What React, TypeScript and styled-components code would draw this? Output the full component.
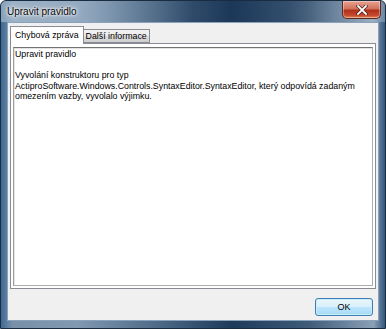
import styled, { createGlobalStyle } from 'styled-components';

const Global = createGlobalStyle`
  html, body { margin: 0; padding: 0; background: #fff; }
  body { font-family: Tahoma, "Liberation Sans", Arial, sans-serif; font-size: 9px; }
`;

const Window = styled.div`
  width: 386px;
  height: 329px;
  box-sizing: border-box;
  display: flex;
  flex-direction: column;
  border: 1px solid #1a2c40;
  border-radius: 6px 6px 0 0;
  background: linear-gradient(90deg, #3e6a95 0%, #7890a8 3%, #8199b1 20%, #4a6785 42%, #1d3a5b 60%, #3f5b79 80%, #8aa0b6 97%, #34577c 100%);
  overflow: hidden;
`;

const TitleBar = styled.div`
  height: 21px;
  flex-shrink: 0;
  display: flex;
  align-items: center;
  justify-content: space-between;
  padding: 0 4px 0 6px;
  background: linear-gradient(90deg, rgba(200,215,230,0.5) 0%, rgba(180,200,220,0.3) 25%, rgba(20,40,70,0.2) 50%, rgba(30,50,80,0.1) 75%, rgba(190,205,220,0.4) 100%);
`;

const Title = styled.span`
  font-family: "Liberation Sans", Arial, sans-serif;
  font-size: 10px;
  color: #000;
  text-shadow: 0 0 6px #fff, 0 0 3px #fff, 0 0 2px #fff;
`;

const CloseButton = styled.div`
  width: 39px;
  height: 18px;
  margin-top: -3px;
  box-sizing: border-box;
  border: 1px solid #5a2a20;
  border-top: none;
  border-radius: 0 0 5px 5px;
  background: linear-gradient(180deg, #e8a393 0%, #d0725b 45%, #b0301a 55%, #c54a2e 85%, #e08a60 100%);
  display: flex;
  align-items: center;
  justify-content: center;
  box-shadow: inset 0 0 0 1px rgba(255,255,255,0.35);
`;

const Client = styled.div`
  flex: 1;
  margin: 0 6px 7px 6px;
  background: #f0f0f0;
  border: 1px solid #8aa2bb;
  display: flex;
  flex-direction: column;
  padding: 2px 2px 0 2px;
`;

const TabStrip = styled.div`
  display: flex;
  align-items: flex-end;
  height: 18px;
  flex-shrink: 0;
  position: relative;
  z-index: 1;
`;

const Tab = styled.div<{ $active?: boolean }>`
  box-sizing: border-box;
  height: ${p => (p.$active ? 18 : 14)}px;
  padding: ${p => (p.$active ? '3px 4px 0 4px' : '1px 2px 0 2px')};
  margin-bottom: ${p => (p.$active ? -1 : 0)}px;
  margin-left: ${p => (p.$active ? 0 : -1)}px;
  border: 1px solid #898c95;
  border-bottom: ${p => (p.$active ? 'none' : '1px solid #898c95')};
  background: ${p => (p.$active ? '#fff' : 'linear-gradient(180deg, #f2f2f2 0%, #ebebeb 50%, #dddddd 51%, #cfcfcf 100%)')};
  color: #000;
  white-space: nowrap;
  font-size: 8.8px;
  line-height: 11px;
  position: relative;
  z-index: ${p => (p.$active ? 2 : 1)};
`;

const TabPanel = styled.div`
  height: 246px;
  flex-shrink: 0;
  box-sizing: border-box;
  border: 1px solid #898c95;
  background: #fff;
  padding: 3px 2px 2px 2px;
  display: flex;
`;

const MessageBox = styled.div`
  flex: 1;
  border: 1px solid #abadb3;
  border-top-color: #737373;
  border-left-color: #a0a0a0;
  box-shadow: inset 1px 1px 0 #e3e3e3;
  background: #fff;
  padding: 1px 1px;
  font-size: 8.8px;
  line-height: 10.5px;
  color: #000;
`;

const Line = styled.div`
  min-height: 10.5px;
  white-space: nowrap;
`;

const ButtonRow = styled.div`
  flex: 1;
  display: flex;
  justify-content: flex-end;
  align-items: flex-end;
  padding: 0 3px 4px 0;
`;

const OkButton = styled.button`
  width: 58px;
  height: 18px;
  padding: 0;
  font-family: inherit;
  font-size: 9px;
  color: #000;
  border: 1px solid #3c7fb1;
  border-radius: 3px;
  background: linear-gradient(180deg, #eaf6fd 0%, #d9f0fc 50%, #bee6fd 51%, #a7d9f5 100%);
  box-shadow: inset 0 0 0 1px #c9ecfc;
`;

export default function App() {
  return (
    <>
      <Global />
      <Window>
        <TitleBar>
          <Title>Upravit pravidlo</Title>
          <CloseButton>
            <svg width="12" height="10" viewBox="0 0 12 10">
              <path d="M2 1 L10 9 M10 1 L2 9" stroke="#4a2018" strokeWidth="3.2" strokeLinecap="square" />
              <path d="M2 1 L10 9 M10 1 L2 9" stroke="#fff" strokeWidth="1.8" strokeLinecap="square" />
            </svg>
          </CloseButton>
        </TitleBar>
        <Client>
          <TabStrip>
            <Tab $active>Chybová zpráva</Tab>
            <Tab>Další informace</Tab>
          </TabStrip>
          <TabPanel>
            <MessageBox>
              <Line>Upravit pravidlo</Line>
              <Line />
              <Line>Vyvolání konstruktoru pro typ</Line>
              <Line>ActiproSoftware.Windows.Controls.SyntaxEditor.SyntaxEditor, který odpovídá zadaným</Line>
              <Line>omezením vazby, vyvolalo výjimku.</Line>
            </MessageBox>
          </TabPanel>
          <ButtonRow>
            <OkButton>OK</OkButton>
          </ButtonRow>
        </Client>
      </Window>
    </>
  );
}
